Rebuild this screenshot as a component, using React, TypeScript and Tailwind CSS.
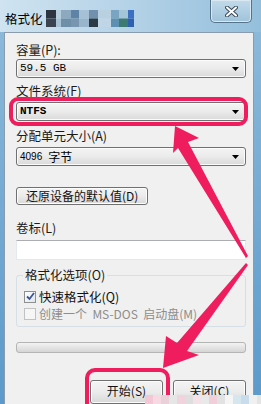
import React from "react";

const cjk = "font-['Noto_Sans_CJK_SC',sans-serif]";
const mono = "font-['Liberation_Mono','Noto_Sans_CJK_SC',monospace]";

const Arrow = () => (
  <svg width="7" height="4" viewBox="0 0 7 4" className="shrink-0">
    <path d="M0 0H7L3.5 4Z" fill="#000" />
  </svg>
);

interface ComboProps {
  children: React.ReactNode;
}

const Combo = ({ children }: ComboProps) => (
  <div className="h-[19px] flex items-center justify-between pl-[3px] pr-[6px]
    border border-[#707070] rounded-[3px]
    bg-gradient-to-b from-[#f4f4f4] via-[#ebebeb] to-[#d9d9d9]
    shadow-[inset_0_0_0_1px_#fbfbfb]">
    {children}
    <Arrow />
  </div>
);

const Label = ({ children }: { children: React.ReactNode }) => (
  <div className={`${cjk} text-[12.5px] leading-[14px] text-[#1a1a1a]`}>{children}</div>
);

const Pixelated = () => {
  const cols = [
    ["#2d3440", "#3a4450", 10],
    ["#b6cddd", "#a9c3d6", 5],
    ["#8da9bf", "#6f8ea8", 10],
    ["#5f83a6", "#7896b0", 8],
    ["#a6c0d6", "#98b5cc", 10],
    ["#7090ad", "#2c3a48", 9],
    ["#b8d0e0", "#c0d6e6", 13],
    ["#7aa5c2", "#5d8fb0", 8],
    ["#a4c4d8", "#3d7a72", 9],
    ["#3d6fc0", "#2f60b0", 6],
  ] as const;
  let x = 0;
  return (
    <svg width="88" height="17" viewBox="0 0 88 17" className="ml-[3px]">
      {cols.map(([a, b, w], i) => {
        const r = (
          <g key={i}>
            <rect x={x} y={0} width={w} height={8.5} fill={a} />
            <rect x={x} y={8.5} width={w} height={8.5} fill={b} />
          </g>
        );
        x += w;
        return r;
      })}
    </svg>
  );
};

const Annotations = () => (
  <svg className="absolute inset-0 pointer-events-none" width="261" height="404" viewBox="0 0 261 404">
    <rect x="11" y="99" width="235" height="25" rx="7" fill="none" stroke="#ef1c5e" strokeWidth="4" />
    <rect x="87" y="370" width="81" height="50" rx="8" fill="none" stroke="#ef1c5e" strokeWidth="4" />
    <polygon
      points="175,126 199,138 188,142 248,256 246,258 178,148 173,153"
      fill="#ef1c5e"
    />
    <polygon
      points="163,368 166,336 177,343 246,263 248,265 187,351 199,355"
      fill="#ef1c5e"
    />
  </svg>
);

const Watermark = () => {
  const c = ["#f3c7d6", "#f6d9e3", "#ead0d8", "#e6e6e6", "#f1d3dd", "#dedede", "#f4e2e8", "#e9e9e9", "#f0cfdb", "#e2e2e2", "#f5f5f5", "#d6e6ef", "#c9dceb", "#f0f0f0", "#e4e4e4"];
  return (
    <svg className="absolute left-[145px] top-[395px] pointer-events-none" width="116" height="9" viewBox="0 0 116 9">
      {c.map((col, i) => (
        <rect key={i} x={i * 8} y={0} width={8} height={9} fill={col} />
      ))}
    </svg>
  );
};

const Btn = ({ children, w }: { children: React.ReactNode; w: string }) => (
  <div className={`${w} h-[24px] flex items-start pt-[3px] justify-center
    border border-[#707070] rounded-[3px]
    bg-gradient-to-b from-[#f4f4f4] via-[#ebebeb] to-[#d8d8d8]
    shadow-[inset_0_0_0_1px_#fcfcfc] ${cjk} text-[12px] leading-[14px] text-[#111]`}>
    {children}
  </div>
);

export default function App() {
  return (
    <div className="relative w-[261px] h-[404px] overflow-hidden flex flex-col bg-gradient-to-b from-[#8ebbdb] to-[#5b9acb]">
      <header className="h-[32px] shrink-0 flex items-start pt-[10px] pl-[5px]
        bg-gradient-to-r from-[#cfe3f0] via-[#b4d2e7] to-[#94bfdc] relative">
        <span className={`${cjk} text-[12.5px] leading-[17px] text-black`}>格式化</span>
        <Pixelated />
        <div className="absolute left-[210px] top-0 w-[42px] h-[23px] rounded-b-[5px]
          border border-t-0 border-[#56738c]
          bg-gradient-to-b from-[#c3dbea] to-[#9fc2db]
          shadow-[inset_0_0_0_1px_#d9e8f2]
          flex items-center justify-center">
          <svg width="13" height="11" viewBox="0 0 13 11">
            <path d="M2 1.5L11 9.5M11 1.5L2 9.5" stroke="#3b4a5a" strokeWidth="4" strokeLinecap="round" />
            <path d="M2 1.5L11 9.5M11 1.5L2 9.5" stroke="#fff" strokeWidth="2" strokeLinecap="round" />
          </svg>
        </div>
      </header>

      <main className="ml-[4px] mr-[7px] grow flex flex-col bg-[#f0f0f0] border border-[#8a9cac] pl-[11px] pr-[7px]">
        <div className="mt-[10px]"><Label>容量(P):</Label></div>
        <div className="mt-[2px]">
          <Combo><span className={`${mono} text-[11px] text-black`}>59.5 GB</span></Combo>
        </div>

        <div className="mt-[6px]"><Label>文件系统(F)</Label></div>
        <div className="mt-[4px]">
          <Combo><span className={`${mono} text-[11px] font-bold text-black`}>NTFS</span></Combo>
        </div>

        <div className="mt-[8px]"><Label>分配单元大小(A)</Label></div>
        <div className="mt-[4px]">
          <Combo>
            <span className="flex items-center gap-[6px] text-black leading-[14px]">
              <span className="font-['Liberation_Sans',sans-serif] text-[10px]">4096</span>
              <span className={`${cjk} text-[12px]`}>字节</span>
            </span>
          </Combo>
        </div>

        <div className="mt-[21px] flex">
          <div className={`h-[18px] px-[9px] flex items-center
            border border-[#707070] rounded-[3px]
            bg-gradient-to-b from-[#f4f4f4] via-[#ebebeb] to-[#d8d8d8]
            shadow-[inset_0_0_0_1px_#fcfcfc] ${cjk} text-[12px] leading-[14px] text-[#111]`}>
            还原设备的默认值(D)
          </div>
        </div>

        <div className="mt-[16px]"><Label>卷标(L)</Label></div>
        <div className="mt-[5px] h-[20px] bg-white border border-[#e3e9ef] border-t-[#abadb3]" />

        <div className="mt-[15px] relative border border-[#d5dfe5] rounded-[3px] pt-[14px] pb-[6px] pl-[7px] flex flex-col gap-[4px]">
          <span className={`absolute -top-[8px] left-[6px] px-[2px] bg-[#f0f0f0] ${cjk} text-[12.5px] leading-[14px] text-[#1a1a1a]`}>
            格式化选项(O)
          </span>
          <div className="h-[13px] flex items-center gap-[3px]">
            <div className="w-[12px] h-[12px] border border-[#8e8f8f] bg-gradient-to-br from-[#ffffff] to-[#dfe6ee] flex items-center justify-center">
              <svg width="9" height="9" viewBox="0 0 9 9">
                <path d="M1 4.5L3.5 7L8 1" fill="none" stroke="#3d5493" strokeWidth="1.8" />
              </svg>
            </div>
            <span className={`${cjk} text-[12.5px] leading-[14px] text-[#111]`}>快速格式化(Q)</span>
          </div>
          <div className="h-[13px] flex items-center gap-[3px]">
            <div className="w-[12px] h-[12px] border border-[#c2c2c2] bg-[#f6f6f6]" />
            <span className={`${cjk} text-[12px] leading-[14px] text-[#8d8d8d] whitespace-pre`}>
              创建一个  MS-DOS  启动盘(M)
            </span>
          </div>
        </div>

        <div className="mt-[15px] h-[11px] rounded-[3px] border border-[#b5b5b5] bg-gradient-to-b from-[#f3f3f3] to-[#d6d6d6]" />

        <div className="mt-[27px] flex justify-end gap-[10px]">
          <Btn w="w-[73px]">开始(S)</Btn>
          <Btn w="w-[73px]">关闭(C)</Btn>
        </div>
      </main>

      <Annotations />
      <Watermark />
    </div>
  );
}
